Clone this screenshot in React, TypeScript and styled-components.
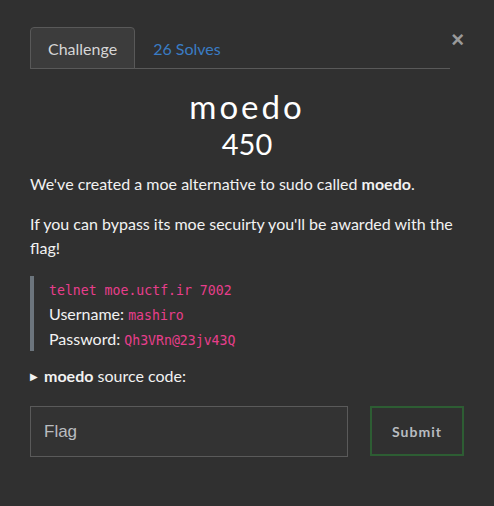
import React from "react";
import styled, { createGlobalStyle } from "styled-components";

const Global = createGlobalStyle`
  html, body { margin: 0; padding: 0; background: #303030; }
  body { font-family: Lato, "Noto Sans", sans-serif; color: #f2f2f2; }
  * { box-sizing: border-box; }
`;

const Modal = styled.div`
  position: relative;
  width: 494px;
  min-height: 506px;
  background: #303030;
  padding: 27px 30px 0 30px;
`;

const Close = styled.button`
  position: absolute;
  top: 29px;
  right: 30px;
  background: none;
  border: none;
  padding: 0;
  color: #9a9a9a;
  font-family: "Liberation Sans", Arial, sans-serif;
  font-size: 22px;
  font-weight: bold;
  line-height: 22px;
  cursor: pointer;
`;

const Tabs = styled.ul`
  display: flex;
  list-style: none;
  margin: 0 14px 0 0;
  padding: 0;
  border-bottom: 1px solid #595959;
`;

const Tab = styled.li<{ $active?: boolean }>`
  margin-bottom: -1px;
  padding: 0 17px;
  height: 42px;
  display: flex;
  align-items: center;
  font-size: 16px;
  border: 1px solid ${(p) => (p.$active ? "#595959" : "transparent")};
  border-bottom: ${(p) => (p.$active ? "1px solid #595959" : "none")};
  border-radius: 4px 4px 0 0;
  background: ${(p) => (p.$active ? "#3c3c3c" : "transparent")};
  color: ${(p) => (p.$active ? "#d6d6d6" : "#3a7cc4")};
`;

const Header = styled.div`
  text-align: center;
  margin-top: 17px;
`;

const Title = styled.h2`
  margin: 0;
  font-size: 33px;
  font-weight: 400;
  letter-spacing: 3px;
  line-height: 40px;
  color: #ffffff;
`;

const Points = styled.h3`
  margin: 0;
  font-size: 29px;
  font-weight: 400;
  line-height: 36px;
  color: #ffffff;
`;

const Desc = styled.div`
  margin-top: 10px;
  font-size: 16px;
  line-height: 24px;
  p { margin: 0 0 16px 0; }
`;

const Quote = styled.blockquote`
  margin: 0 0 13px 0;
  padding: 0 0 0 15px;
  border-left: 4px solid #6c757d;
  line-height: 25px;
`;

const Code = styled.code`
  font-family: "DejaVu Sans Mono", "Liberation Mono", monospace;
  font-size: 13.2px;
  line-height: 1;
  color: #e83e8c;
`;

const Details = styled.div`
  font-size: 16px;
  line-height: 24px;
  display: flex;
  align-items: center;
  gap: 6px;
`;

const Arrow = styled.span`
  font-size: 10px;
  color: #f2f2f2;
`;

const Form = styled.form`
  margin-top: 18px;
  display: grid;
  grid-template-columns: 318px 94px;
  column-gap: 22px;
  align-items: start;
`;

const Input = styled.input`
  height: 51px;
  background: #333333;
  border: 1px solid #5a5a5a;
  padding: 0 13px;
  font-family: "Liberation Sans", Arial, sans-serif;
  font-size: 17px;
  color: #ddd;
  &::placeholder { color: #b9bcc0; }
  outline: none;
`;

const Submit = styled.button`
  height: 50px;
  background: transparent;
  border: 2px solid #2d5d33;
  color: #b8bcc0;
  font-family: Lato, sans-serif;
  font-weight: 700;
  font-size: 14px;
  letter-spacing: 1px;
`;

export default function App() {
  return (
    <>
      <Global />
      <Modal>
        <Close aria-label="Close">×</Close>
        <Tabs>
          <Tab $active>Challenge</Tab>
          <Tab>26 Solves</Tab>
        </Tabs>
        <Header>
          <Title>moedo</Title>
          <Points>450</Points>
        </Header>
        <Desc>
          <p>
            We've created a moe alternative to sudo called <b>moedo</b>.
          </p>
          <p>If you can bypass its moe secuirty you'll be awarded with the flag!</p>
          <Quote>
            <div><Code>telnet moe.uctf.ir 7002</Code></div>
            <div>Username: <Code>mashiro</Code></div>
            <div>Password: <Code>Qh3VRn@23jv43Q</Code></div>
          </Quote>
          <Details>
            <Arrow>▶</Arrow>
            <span><b>moedo</b> source code:</span>
          </Details>
        </Desc>
        <Form onSubmit={(e) => e.preventDefault()}>
          <Input placeholder="Flag" />
          <Submit type="submit">Submit</Submit>
        </Form>
      </Modal>
    </>
  );
}
